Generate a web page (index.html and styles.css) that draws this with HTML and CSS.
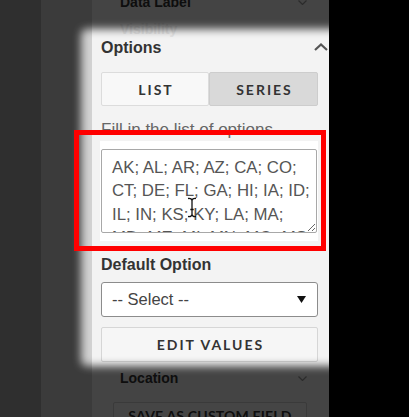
FILE: index.html
```html
<!DOCTYPE html>
<html>
<head>
<meta charset="utf-8">
<link rel="stylesheet" href="styles.css">
</head>
<body>
<div class="app">
  <div class="rail rail-a"></div>
  <div class="rail rail-b"></div>
  <aside class="panel">
    <div class="row row-first">
      <span class="row-label">Data Label</span>
      <svg class="chev-down" width="9" height="5" viewBox="0 0 9 5"><polyline points="0.5,0.5 4.5,4.5 8.5,0.5" fill="none" stroke="#9a9a9a" stroke-width="1.2"/></svg>
    </div>
    <div class="row row-faint">
      <span class="row-label faint">Visibility</span>
    </div>
    <section class="options">
      <header class="opt-head">
        <h2 class="opt-title">Options</h2>
        <svg class="chev-up" width="14" height="8" viewBox="0 0 14 8"><polyline points="1,7 7,1.5 13,7" fill="none" stroke="#555" stroke-width="2.2"/></svg>
      </header>
      <div class="tabs">
        <button class="tab tab-on">LIST</button>
        <button class="tab tab-off">SERIES</button>
      </div>
      <p class="hint">Fill in the list of options</p>
      <div class="ta-wrap">
        <textarea class="ta">AK; AL; AR; AZ; CA; CO; CT; DE; FL; GA; HI; IA; ID; IL; IN; KS; KY; LA; MA; MD; ME; MI; MN; MO; MS; MT; NC; ND; NE; NH; NJ; NM; NV; NY; OH; OK; OR; PA; RI; SC; SD; TN; TX; UT; VA; VT; WA; WI; WV; WY</textarea>
      </div>
      <h3 class="field-label">Default Option</h3>
      <div class="select">
        <span>-- Select --</span>
        <svg width="9" height="7" viewBox="0 0 9 7"><polygon points="0,0 9,0 4.5,7" fill="#111"/></svg>
      </div>
      <button class="btn">EDIT VALUES</button>
    </section>
    <div class="row row-loc">
      <span class="row-label">Location</span>
      <svg class="chev-down" width="9" height="5" viewBox="0 0 9 5"><polyline points="0.5,0.5 4.5,4.5 8.5,0.5" fill="none" stroke="#9a9a9a" stroke-width="1.2"/></svg>
    </div>
    <button class="btn btn-save">SAVE AS CUSTOM FIELD</button>
  </aside>
  <div class="void"></div>
  <div class="spotlight"></div>
  <div class="callout"></div>
  <svg class="ibeam" width="10" height="21" viewBox="0 0 10 21"><path d="M1 1.5 Q5 1 5 4 Q5 1 9 1.5 M5 4 V17 M3.3 12.5 H6.7 M1 19.5 Q5 20 5 17 Q5 20 9 19.5" fill="none" stroke="#111" stroke-width="1.3"/></svg>
</div>
</body>
</html>
```
FILE: styles.css
```css
html, body {
  margin: 0;
  padding: 0;
  background: #000;
}
.app {
  position: relative;
  display: flex;
  width: 409px;
  height: 417px;
  overflow: hidden;
  font-family: "Liberation Sans", Arial, sans-serif;
}
.rail { flex: none; height: 100%; }
.rail-a { width: 41px; background: #a8a8a8; }
.rail-b { width: 51px; background: #d2d2d2; }
.void { flex: 1; background: #000; }

.panel {
  flex: none;
  width: 237px;
  height: 100%;
  background: #f3f3f3;
  display: flex;
  flex-direction: column;
}
.panel > * { flex-shrink: 0; }
.row {
  display: flex;
  justify-content: space-between;
  align-items: center;
  height: 18px;
  padding: 0 22px 0 28px;
}
.row-label {
  font-size: 14px;
  line-height: 18px;
  font-weight: bold;
  color: #333;
}
.row-label.faint { color: #e4e4e4; }
.row-first { margin-top: -7px; }
.row-faint { margin-top: 9px; }
.row-loc { margin-top: 7px; }

.options {
  padding: 0 11px 0 9px;
  display: flex;
  flex-direction: column;
}
.options > * { flex-shrink: 0; }
.opt-head {
  display: flex;
  justify-content: space-between;
  align-items: center;
  margin-right: -10px;
  height: 20px;
}
.opt-title {
  margin: 0;
  font-size: 16px;
  line-height: 20px;
  font-weight: bold;
  color: #333;
}
.chev-up { margin-top: -2px; }

.tabs {
  display: grid;
  grid-template-columns: 108px 1fr;
  height: 34px;
  margin-top: 14px;
}
.tab {
  margin: 0;
  font-family: Lato, "Liberation Sans", sans-serif;
  font-weight: bold;
  font-size: 14px;
  letter-spacing: 2px;
  padding: 0 0 0 2px;
  color: #333;
  border-radius: 2px;
}
.tab-on { background: #f8f8f8; border: 1px solid #dcdcdc; }
.tab-off { background: #d9d9d9; border: 1px solid #cdcdcd; }

.hint {
  margin: 14px 0 0;
  font-size: 17px;
  line-height: 20px;
  color: #666;
}
.ta-wrap {
  margin: 1px 0 0 -1px;
  padding: 8px 1px;
  background: #fff;
}
.ta {
  display: block;
  box-sizing: border-box;
  width: 100%;
  height: 84px;
  margin: 0;
  border: 1px solid #a8a8a8;
  border-radius: 2px;
  padding: 6px 1px 0 10px;
  font-family: "Liberation Sans", Arial, sans-serif;
  font-size: 16.8px;
  line-height: 23.3px;
  color: #555;
  background: #fff;
  resize: both;
  overflow: hidden;
}
.field-label {
  margin: 14px 0 0;
  font-size: 16px;
  line-height: 20px;
  font-weight: bold;
  color: #333;
}
.select {
  box-sizing: border-box;
  height: 35px;
  margin-top: 7px;
  display: flex;
  justify-content: space-between;
  align-items: center;
  padding: 0 11px 0 10px;
  border: 1px solid #8c8c8c;
  border-radius: 3px;
  background: #fff;
  font-size: 16.5px;
  color: #444;
}
.btn {
  box-sizing: border-box;
  height: 35px;
  margin: 10px 0 0;
  padding: 0 0 0 2px;
  border: 1px solid #d6d6d6;
  border-radius: 2px;
  background: #f6f6f6;
  font-family: Lato, "Liberation Sans", sans-serif;
  font-weight: bold;
  font-size: 14px;
  letter-spacing: 2px;
  color: #333;
}
.btn-save {
  height: 26px;
  margin: 15px 22px 0 21px;
  padding: 0;
  letter-spacing: 0.2px;
  border-color: #cfcfcf;
}

.spotlight {
  position: absolute;
  left: 81px;
  top: 29px;
  width: 300px;
  height: 337px;
  border-radius: 6px;
  box-shadow: 0 0 0 2000px rgba(0, 0, 0, 0.72);
  filter: blur(4px);
  pointer-events: none;
}
.callout {
  position: absolute;
  left: 74px;
  top: 130px;
  width: 252px;
  height: 121px;
  box-sizing: border-box;
  border: 5px solid #ff0000;
  pointer-events: none;
}
.ibeam {
  position: absolute;
  left: 187px;
  top: 197px;
}
```
